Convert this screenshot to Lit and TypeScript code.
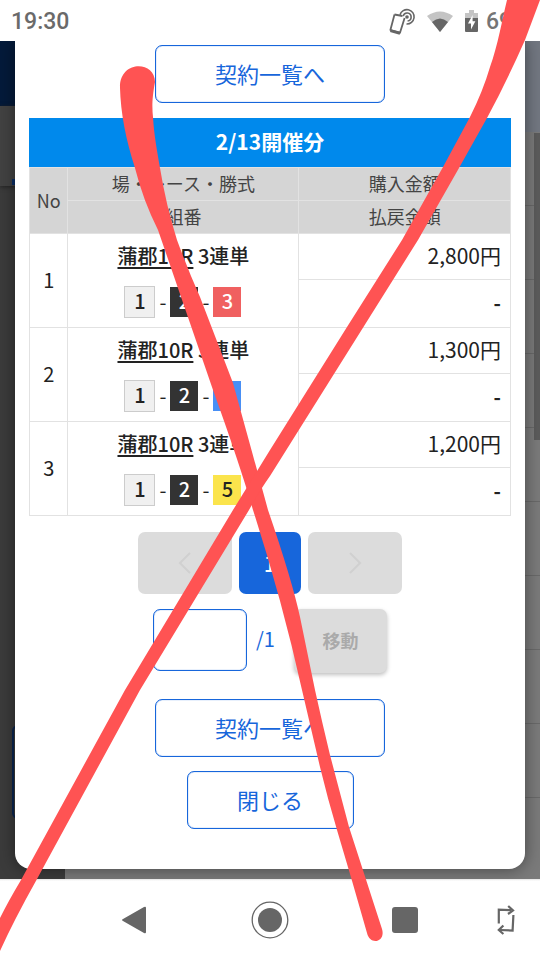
import { LitElement, html, svg, css } from "lit";
import { customElement, property } from "lit/decorators.js";

interface Bet {
  place: string;
  type: string;
  boats: number[];
  amount: string;
  refund: string;
}

const BETS: Bet[] = [
  { place: "蒲郡10R", type: "3連単", boats: [1, 2, 3], amount: "2,800円", refund: "-" },
  { place: "蒲郡10R", type: "3連単", boats: [1, 2, 4], amount: "1,300円", refund: "-" },
  { place: "蒲郡10R", type: "3連単", boats: [1, 2, 5], amount: "1,200円", refund: "-" },
];

@customElement("status-bar")
class StatusBar extends LitElement {
  static styles = css`
    :host {
      display: flex;
      align-items: center;
      box-sizing: border-box;
      height: 41px;
      padding: 2px 11px 0;
      background: #fff;
      color: #757575;
      font: 500 23px/39px Roboto, sans-serif;
    }
    .time { flex: 1; color: #6a6a6a; }
    .icons { display: flex; align-items: center; gap: 8px; }
    svg { display: block; }
    .cast { margin-right: 3px; }
    .wifi { margin-right: 4px; }
  `;
  render() {
    return html`
      <span class="time">19:30</span>
      <span class="icons">
        <svg class="cast" width="27" height="27" viewBox="0 0 27 27" fill="none" stroke="#666">
          <path d="M5.5 6.5 L13.5 8 M5.5 6.5 L1.4 22 L11 24.8 L15.6 10" stroke-width="1.8" stroke-linejoin="round" />
          <path d="M1.4 22.6 L11 25.2" stroke-width="3" />
          <circle cx="18" cy="9" r="1.8" fill="#666" stroke="none" />
          <path d="M14.2 8.2 A4 4 0 1 1 18.6 13" stroke-width="1.6" />
          <path d="M11 6.8 A7.2 7.2 0 1 1 17.5 16" stroke-width="1.6" />
        </svg>
        <svg class="wifi" width="26" height="22" viewBox="0 0 26 22">
          <path d="M0 5 Q13 -4 26 5 L13 21 Z" fill="#c4c4c4" />
          <path d="M5 11 Q13 4 21 11 L13 21 Z" fill="#666" />
        </svg>
        <svg width="13" height="23" viewBox="0 0 13 23">
          <path d="M0 3 H4 V0 H9 V3 H13 V9 H0 Z" fill="#c4c4c4" />
          <path d="M0 8 H13 V21 Q13 22 12 22 H1 Q0 22 0 21 Z" fill="#666" />
          <path d="M7.6 5 L3 13.5 H6 V19.5 L10.4 11.3 H7.6 Z" fill="#fff" />
        </svg>
        <span>69%</span>
      </span>
    `;
  }
}

@customElement("system-nav")
class SystemNav extends LitElement {
  static styles = css`
    :host {
      display: grid;
      grid-template-columns: 2fr 2fr 2fr 1fr;
      padding-left: 12.5%;
      height: 81px;
      background: linear-gradient(#e4e4e4, #fff 2px);
    }
    button {
      display: grid;
      place-items: center;
      padding: 0;
      border: 0;
      background: none;
    }
    svg { display: block; }
  `;
  render() {
    return html`
      <button aria-label="戻る">
        <svg width="28" height="30" viewBox="0 0 28 30"><path d="M2 14 L23 2 Q25 1 25 3 V27 Q25 29 23 28 L2 16 Q0 15 2 14 Z" fill="#666" /></svg>
      </button>
      <button aria-label="ホーム">
        <svg width="38" height="38" viewBox="0 0 38 38"><circle cx="19" cy="19" r="17.8" fill="none" stroke="#666" stroke-width="1.3" /><circle cx="19" cy="19" r="12" fill="#666" /></svg>
      </button>
      <button aria-label="履歴">
        <svg width="26" height="26" viewBox="0 0 26 26"><rect width="26" height="26" rx="3" fill="#666" /></svg>
      </button>
      <button aria-label="画面の回転">
        <svg width="18" height="30" viewBox="0 0 18 30" fill="none" stroke="#666" stroke-width="2.2">
          <path d="M1.8 18.5 V4.6 L14 5.2" /><path d="M11.2 1 L16 5.4 L11 9" />
          <path d="M16.4 10 L15.6 25.6 L3 25" /><path d="M6.4 20.5 L1.8 25 L6.4 29" />
        </svg>
      </button>
    `;
  }
}

@customElement("bet-table")
class BetTable extends LitElement {
  @property({ attribute: false }) bets: Bet[] = [];
  static styles = css`
    .title {
      margin: 0;
      padding-bottom: 3px;
      background: #0089ec;
      color: #fff;
      text-align: center;
      font-size: 21px;
      font-weight: 700;
      line-height: 46px;
    }
    table {
      width: 100%;
      table-layout: fixed;
      border-collapse: collapse;
    }
    .no { width: 8%; }
    .race { width: 48%; }
    th, td {
      box-sizing: border-box;
      padding: 0 0 2px;
      border: 1px solid #e2e2e2;
      font-weight: 400;
    }
    th {
      height: 33px;
      background: #d5d5d5;
      color: #444;
      font-size: 18px;
      line-height: 24px;
    }
    td { text-align: center; font-size: 20px; line-height: 24px; }
    .yen { height: 46px; padding: 0 9px 4px 0; text-align: right; font-size: 21px; }
    .refund { height: 48px; padding: 0 9px 2px 0; text-align: right; font-weight: 700; }
    .name { font-weight: 500; line-height: 30px; }
    a { color: inherit; text-decoration: underline; text-underline-offset: 3px; text-decoration-thickness: 2px; }
    .combo {
      display: flex;
      align-items: center;
      justify-content: center;
      gap: 4px;
      height: 32px;
      margin-top: 15px;
      padding-right: 1px;
    }
    .boat {
      box-sizing: border-box;
      width: 28px;
      height: 30px;
      color: #fff;
      font-weight: 500;
      line-height: 27px;
    }
    .b1 { width: 31px; height: 32px; border: 1px solid #ccc; background: #f0f0f0; color: #222; }
    .b2 { background: #333; }
    .b3 { background: #f06060; }
    .b4 { background: #488ff5; }
    .b5 { background: #fbe44c; color: #222; }
  `;
  private boat(n: number, i: number) {
    return html`${i ? html`<span>-</span>` : ""}<span class="boat b${n}">${n}</span>`;
  }
  render() {
    return html`
      <h2 class="title">2/13開催分</h2>
      <table aria-label="2/13開催分">
        <thead>
          <tr><th class="no" rowspan="2">No</th><th class="race">場・レース・勝式</th><th>購入金額</th></tr>
          <tr><th>組番</th><th>払戻金額</th></tr>
        </thead>
        <tbody>
          ${this.bets.map(
            (b, i) => html`
              <tr>
                <td rowspan="2">${i + 1}</td>
                <td rowspan="2">
                  <div class="name"><a href="#race">${b.place}</a> ${b.type}</div>
                  <div class="combo">${b.boats.map((n, j) => this.boat(n, j))}</div>
                </td>
                <td class="yen">${b.amount}</td>
              </tr>
              <tr><td class="refund">${b.refund}</td></tr>
            `
          )}
        </tbody>
      </table>
    `;
  }
}

@customElement("app-root")
class AppRoot extends LitElement {
  static styles = css`
    :host {
      display: flex;
      flex-direction: column;
      position: relative;
      min-height: 100vh;
      overflow: hidden;
      background: #fff;
      color: #222;
      font-family: "Noto Sans CJK JP", sans-serif;
    }
    .stage {
      position: relative;
      flex: 1;
      padding: 0 15px 10px;
      overflow: hidden;
    }
    .behind {
      position: absolute;
      inset: 0;
      display: grid;
      grid-template-columns: 65px 1fr;
    }
    .side { background: #3b3b3b; }
    .side-head { height: 65px; background: #041a3a; }
    .side-tab {
      box-sizing: border-box;
      height: 80px;
      padding: 73px 0 0 12px;
      background: #424242;
      box-shadow: 0 1px 4px #222;
    }
    .mark { height: 6px; background: #0a2e66; }
    .side-card {
      box-sizing: border-box;
      height: 94px;
      margin: 539px 0 0 12px;
      border: 2px solid #0a2550;
      border-radius: 6px;
    }
    .page { background: #7a7a7a; }
    .page-head { height: 91px; background: #727781; }
    .line { height: 73px; border-bottom: 1px solid #696969; }
    .thumb {
      position: absolute;
      top: 92px;
      right: 0;
      width: 6px;
      height: 307px;
      background: #5b5b5b;
    }
    .modal {
      position: relative;
      display: flex;
      flex-direction: column;
      align-items: center;
      padding: 4px 14px 40px;
      border-radius: 0 0 16px 16px;
      background: #fff;
      box-shadow: 0 0 16px rgba(0, 0, 0, 0.45);
    }
    bet-table { display: block; align-self: stretch; margin: 15px 0 16px; }
    button, input {
      box-sizing: border-box;
      padding: 0 0 3px;
      border: 0;
      border-radius: 7px;
      font: 400 22px/30px "Noto Sans CJK JP", sans-serif;
    }
    .outline {
      width: 230px;
      height: 58px;
      border: 1px solid #1766db;
      box-shadow: inset 0 0 1px #1766db;
      background: #fff;
      color: #1766db;
    }
    .close { width: 167px; margin-top: 14px; }
    .pager { display: flex; gap: 7px; }
    .step, .current { display: grid; place-items: center; height: 62px; }
    .step { width: 94px; padding: 0; background: #dcdcdc; }
    .current { width: 62px; background: #1766db; color: #fff; font-weight: 500; }
    .jump {
      display: flex;
      align-items: flex-start;
      width: 234px;
      height: 62px;
      margin: 15px 0 28px;
    }
    .field { width: 94px; height: 62px; border: 1px solid #1766db; box-shadow: inset 0 0 1px #1766db; background: #fff; text-align: center; }
    .total { flex: 1; padding-left: 9px; color: #1766db; font-size: 20px; line-height: 59px; }
    .go {
      width: 93px;
      height: 64px;
      background: #dcdcdc;
      color: #aaa;
      font-size: 18px;
      font-weight: 700;
      box-shadow: 0 2px 4px rgba(0, 0, 0, 0.25);
    }
    .scribble {
      position: absolute;
      inset: 0;
      width: 100%;
      height: 100%;
      pointer-events: none;
    }
  `;
  private chevron(d: string) {
    return html`<svg width="14" height="22" viewBox="0 0 14 22" fill="none" stroke="#d0d0d0" stroke-width="2">${svg`<path d=${d} />`}</svg>`;
  }
  render() {
    return html`
      <status-bar></status-bar>
      <main class="stage">
        <div class="behind" aria-hidden="true">
          <div class="side">
            <div class="side-head"></div>
            <div class="side-tab"><div class="mark"></div></div>
            <div class="side-card"></div>
          </div>
          <div class="page">
            <div class="page-head"></div>
            ${Array.from({ length: 9 }, () => html`<div class="line"></div>`)}
          </div>
          <div class="thumb"></div>
        </div>
        <section class="modal" role="dialog" aria-label="2/13開催分">
          <button class="outline">契約一覧へ</button>
          <bet-table .bets=${BETS}></bet-table>
          <nav class="pager">
            <button class="step" disabled aria-label="前へ">${this.chevron("M12 1 L2 11 L12 21")}</button>
            <button class="current">1</button>
            <button class="step" disabled aria-label="次へ">${this.chevron("M2 1 L12 11 L2 21")}</button>
          </nav>
          <div class="jump">
            <input class="field" id="page" type="text" aria-label="ページ" />
            <label class="total" for="page">/1</label>
            <button class="go" disabled>移動</button>
          </div>
          <button class="outline">契約一覧へ</button>
          <button class="outline close">閉じる</button>
        </section>
      </main>
      <system-nav></system-nav>
      <svg class="scribble" viewBox="0 0 540 960" preserveAspectRatio="none" fill="#ff5353" aria-hidden="true">
        <path d="M120 88 C119 60 155 60 155 82 C152 98 152 108 153 117 C154 135 157 150 160 168 Q166 205 177 240 Q188 270 200 297 L233 383 Q246 430 268 510 Q292 580 300 617 L315 690 Q322 722 330 755 L349 827 L382 929 C386 942 370 946 367 933 Q352 880 337 830 Q328 800 320 767 L302 690 Q282 600 253 510 Q240 465 213 390 L158 230 Q143 200 135 168 Q121 125 120 88 Z" />
        <path d="M507 0 H540 L525 40 Q506 83 487 118 L459 168 L418 240 L270 476 Q260 490 249 510 L140 690 L37 879 Q14 920 0 951 V918 Q9 900 21 880 L125 690 L233 510 L270 450 L347 327 L402 240 L443 167 L470 117 Q483 91 490 67 C498 45 502 20 507 0 Z" />
      </svg>
    `;
  }
}
